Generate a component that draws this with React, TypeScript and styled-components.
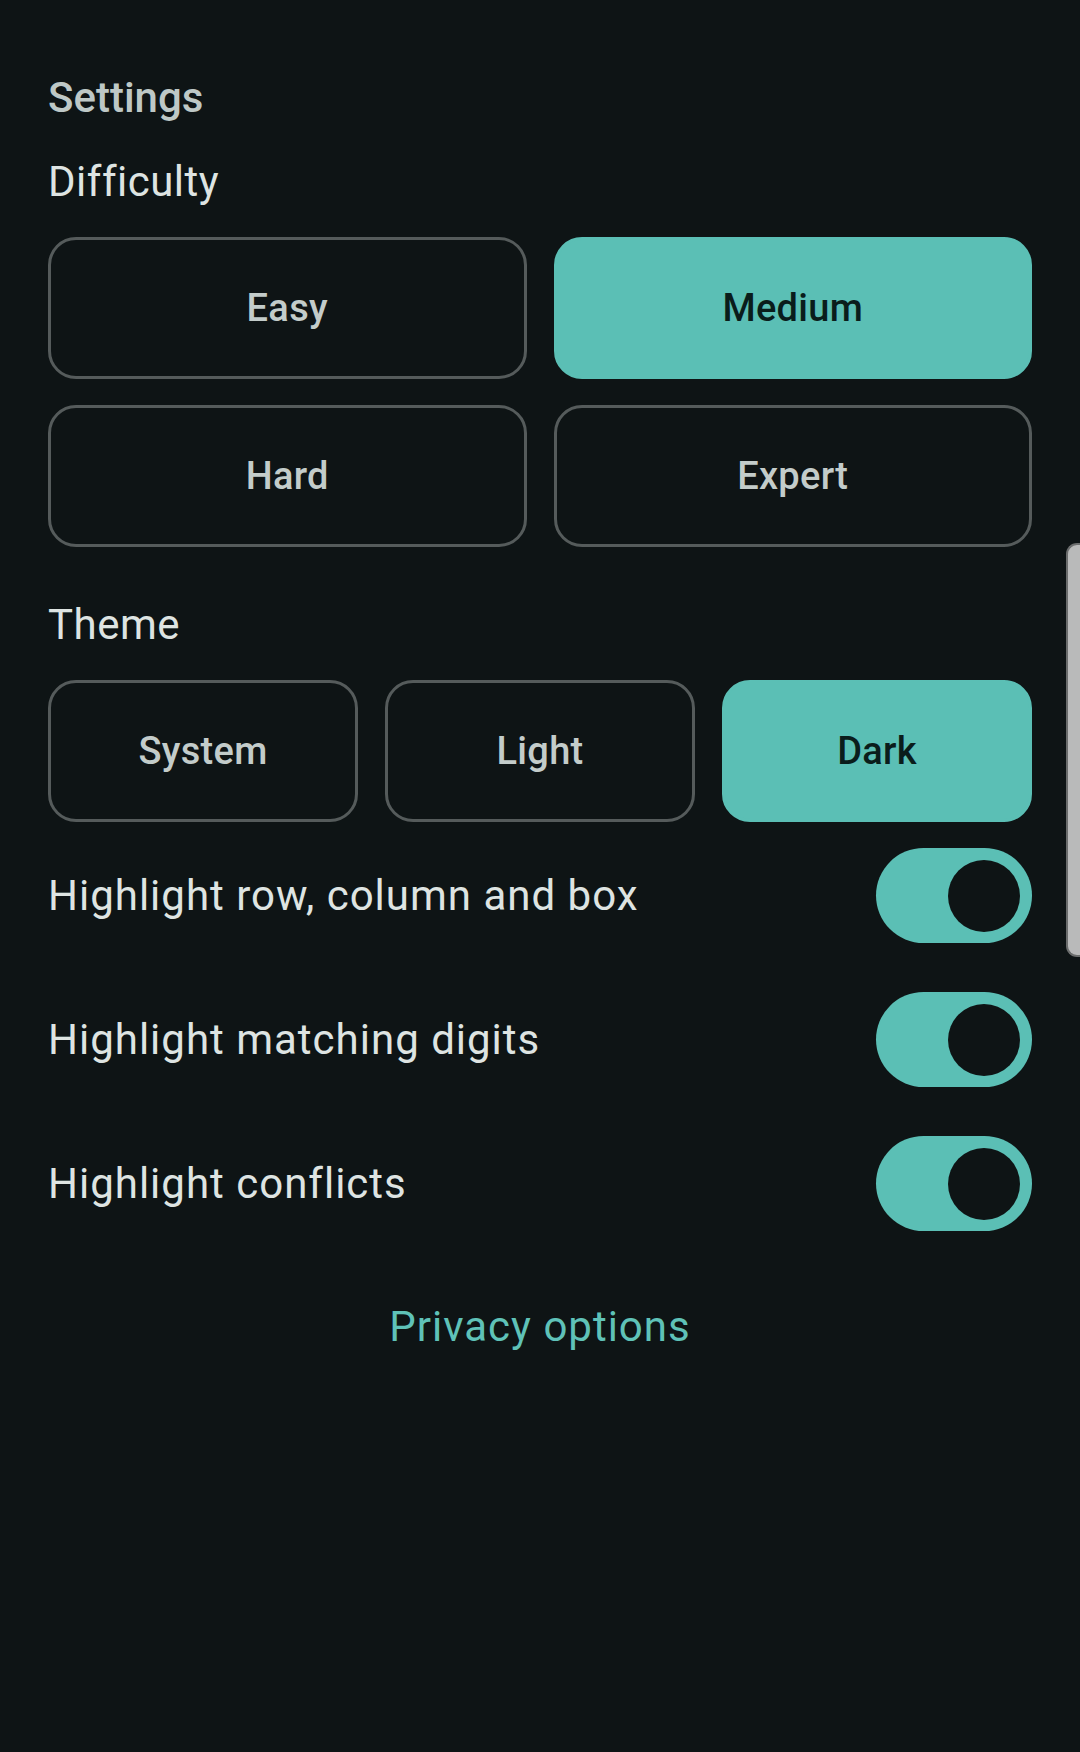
import React, { useState } from "react";
import styled, { createGlobalStyle } from "styled-components";

const GlobalStyle = createGlobalStyle`
  html, body {
    margin: 0;
    padding: 0;
    background: #0e1415;
  }
  body {
    font-family: Roboto, "Noto Sans", "Liberation Sans", sans-serif;
    -webkit-font-smoothing: antialiased;
  }
`;

const Screen = styled.div`
  min-height: 1752px;
  box-sizing: border-box;
  padding: 70px 48px 0;
  background: #0e1415;
  display: flex;
  flex-direction: column;
`;

const Title = styled.h1`
  margin: 0;
  font-size: 42px;
  line-height: 56px;
  font-weight: 500;
  letter-spacing: 0;
  color: #bec8c6;
`;

const SectionLabel = styled.h2<{ $top: number }>`
  margin: ${(p) => p.$top}px 0 27px;
  font-size: 42px;
  line-height: 56px;
  font-weight: 400;
  letter-spacing: 0.5px;
  color: #dee4e2;
`;

const ChoiceGrid = styled.div<{ $cols: number }>`
  display: grid;
  grid-template-columns: repeat(${(p) => p.$cols}, 1fr);
  column-gap: 27px;
  row-gap: 26px;
`;

const Choice = styled.button<{ $active: boolean }>`
  height: 142px;
  box-sizing: border-box;
  border-radius: 28px;
  border: 3px solid ${(p) => (p.$active ? "#5bbfb5" : "#555b5b")};
  background: ${(p) => (p.$active ? "#5bbfb5" : "transparent")};
  color: ${(p) => (p.$active ? "#0a1d1b" : "#c3ccca")};
  font-family: inherit;
  font-size: 38px;
  font-weight: 500;
  letter-spacing: 0.3px;
  cursor: pointer;
  padding: 0;
`;

const ToggleList = styled.div`
  margin-top: 1px;
  display: flex;
  flex-direction: column;
`;

const ToggleRow = styled.label`
  height: 144px;
  display: flex;
  align-items: center;
  justify-content: space-between;
  cursor: pointer;
`;

const ToggleText = styled.span`
  font-size: 42px;
  font-weight: 400;
  letter-spacing: 1px;
  color: #dee4e2;
`;

const Track = styled.span<{ $on: boolean }>`
  position: relative;
  width: 156px;
  height: 95px;
  border-radius: 48px;
  box-sizing: border-box;
  background: ${(p) => (p.$on ? "#5bbfb5" : "transparent")};
  border: ${(p) => (p.$on ? "none" : "3px solid #899390")};
  flex-shrink: 0;
`;

const Thumb = styled.span<{ $on: boolean }>`
  position: absolute;
  top: 12px;
  right: ${(p) => (p.$on ? "12px" : "auto")};
  left: ${(p) => (p.$on ? "auto" : "12px")};
  width: 72px;
  height: 72px;
  border-radius: 50%;
  background: ${(p) => (p.$on ? "#0e1415" : "#899390")};
`;

const LinkButton = styled.button`
  align-self: center;
  margin-top: 44px;
  background: none;
  border: none;
  padding: 0;
  font-family: inherit;
  font-size: 42px;
  line-height: 56px;
  font-weight: 400;
  letter-spacing: 1px;
  color: #5fc2b8;
  cursor: pointer;
`;

const EdgeHandle = styled.div`
  position: fixed;
  right: 0;
  top: 543px;
  width: 12px;
  height: 410px;
  background: #b9baba;
  border: 2px solid #6b6d6d;
  border-right: none;
  border-radius: 11px 0 0 11px;
`;

const difficulties = ["Easy", "Medium", "Hard", "Expert"];
const themes = ["System", "Light", "Dark"];

export default function App() {
  const [difficulty, setDifficulty] = useState("Medium");
  const [theme, setTheme] = useState("Dark");
  const [toggles, setToggles] = useState<Record<string, boolean>>({
    "Highlight row, column and box": true,
    "Highlight matching digits": true,
    "Highlight conflicts": true,
  });

  return (
    <>
      <GlobalStyle />
      <Screen>
        <Title>Settings</Title>
        <SectionLabel $top={28}>Difficulty</SectionLabel>
        <ChoiceGrid $cols={2}>
          {difficulties.map((d) => (
            <Choice key={d} $active={d === difficulty} onClick={() => setDifficulty(d)}>
              {d}
            </Choice>
          ))}
        </ChoiceGrid>
        <SectionLabel $top={50}>Theme</SectionLabel>
        <ChoiceGrid $cols={3}>
          {themes.map((t) => (
            <Choice key={t} $active={t === theme} onClick={() => setTheme(t)}>
              {t}
            </Choice>
          ))}
        </ChoiceGrid>
        <ToggleList>
          {Object.entries(toggles).map(([label, on]) => (
            <ToggleRow
              key={label}
              onClick={() => setToggles((s) => ({ ...s, [label]: !s[label] }))}
            >
              <ToggleText>{label}</ToggleText>
              <Track $on={on}>
                <Thumb $on={on} />
              </Track>
            </ToggleRow>
          ))}
        </ToggleList>
        <LinkButton>Privacy options</LinkButton>
      </Screen>
      <EdgeHandle />
    </>
  );
}
